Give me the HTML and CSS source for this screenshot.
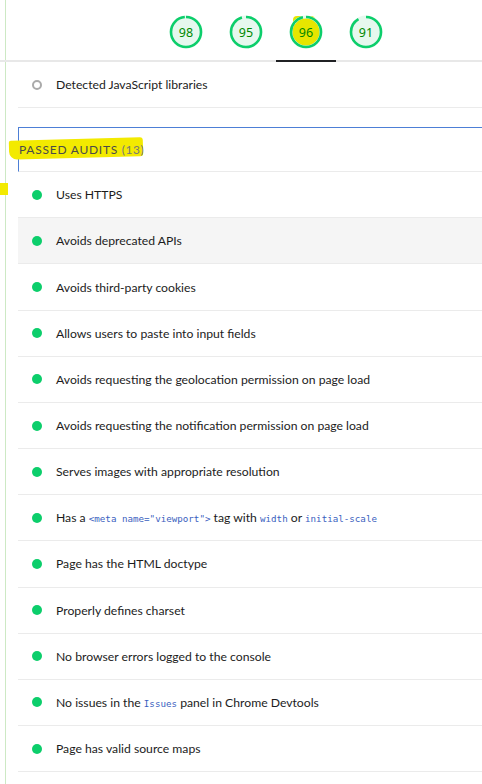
FILE: index.html
```html
<!DOCTYPE html>
<html>
<head>
<meta charset="utf-8">
<link rel="stylesheet" href="styles.css">
</head>
<body>
<div class="page">
  <div class="tabs">
    <div class="tab"><div class="gauge"><svg viewBox="0 0 34 34" width="34" height="34"><circle cx="17" cy="17" r="15" class="g-bg"/><circle cx="17" cy="17" r="15" class="g-arc" stroke-dasharray="92.4 94.25" transform="rotate(-90 17 17)"/></svg><span>98</span></div></div>
    <div class="tab"><div class="gauge"><svg viewBox="0 0 34 34" width="34" height="34"><circle cx="17" cy="17" r="15" class="g-bg"/><circle cx="17" cy="17" r="15" class="g-arc" stroke-dasharray="89.5 94.25" transform="rotate(-90 17 17)"/></svg><span>95</span></div></div>
    <div class="tab active"><div class="gauge"><span class="hl-blob"></span><svg viewBox="0 0 34 34" width="34" height="34"><circle cx="17" cy="17" r="15" class="g-bg hl"/><circle cx="17" cy="17" r="15" class="g-arc" stroke-dasharray="90.5 94.25" transform="rotate(-90 17 17)"/></svg><span>96</span></div></div>
    <div class="tab"><div class="gauge"><svg viewBox="0 0 34 34" width="34" height="34"><circle cx="17" cy="17" r="15" class="g-bg"/><circle cx="17" cy="17" r="15" class="g-arc" stroke-dasharray="85.8 94.25" transform="rotate(-90 17 17)"/></svg><span>91</span></div></div>
  </div>
  <div class="content">
    <div class="row"><span class="dot info"></span><span class="title">Detected JavaScript libraries</span></div>
    <div class="spacer"></div>
    <div class="group-head">
      <span class="marker"></span>
      <span class="group-title">Passed audits <span class="count">(13)</span></span>
    </div>
    <div class="left-mark"></div>
    <div class="row"><span class="dot pass"></span><span class="title">Uses HTTPS</span></div>
    <div class="row hover"><span class="dot pass"></span><span class="title">Avoids deprecated APIs</span></div>
    <div class="row"><span class="dot pass"></span><span class="title">Avoids third-party cookies</span></div>
    <div class="row"><span class="dot pass"></span><span class="title">Allows users to paste into input fields</span></div>
    <div class="row"><span class="dot pass"></span><span class="title">Avoids requesting the geolocation permission on page load</span></div>
    <div class="row"><span class="dot pass"></span><span class="title">Avoids requesting the notification permission on page load</span></div>
    <div class="row"><span class="dot pass"></span><span class="title">Serves images with appropriate resolution</span></div>
    <div class="row"><span class="dot pass"></span><span class="title">Has a <code>&lt;meta name="viewport"&gt;</code> tag with <code>width</code> or <code>initial-scale</code></span></div>
    <div class="row"><span class="dot pass"></span><span class="title">Page has the HTML doctype</span></div>
    <div class="row"><span class="dot pass"></span><span class="title">Properly defines charset</span></div>
    <div class="row"><span class="dot pass"></span><span class="title">No browser errors logged to the console</span></div>
    <div class="row"><span class="dot pass"></span><span class="title">No issues in the <code>Issues</code> panel in Chrome Devtools</span></div>
    <div class="row"><span class="dot pass"></span><span class="title">Page has valid source maps</span></div>
  </div>
</div>
</body>
</html>
```
FILE: styles.css
```css
html, body {
  margin: 0;
  padding: 0;
  background: #fff;
  overflow: hidden;
}
body {
  font-family: "Lato", "Noto Sans", sans-serif;
  font-size: 12.2px;
  color: #1c1c1c;
}
.page {
  width: 482px;
  height: 784px;
  border-left: 1px solid #cde9c4;
  margin-left: 5px;
  box-sizing: border-box;
  position: relative;
}
.tabs {
  display: flex;
  height: 60px;
  border-bottom: 2px solid #e8e8e8;
  margin-left: -6px;
  padding-left: 156px;
}
.tab {
  width: 60px;
  display: flex;
  justify-content: center;
  padding-top: 15px;
  box-sizing: border-box;
  position: relative;
}
.tab.active::after {
  content: "";
  position: absolute;
  left: 0;
  right: 0;
  bottom: -2px;
  height: 2px;
  background: #202124;
}
.gauge {
  position: relative;
  width: 34px;
  height: 34px;
}
.gauge svg { display: block; position: relative; }
.g-bg {
  fill: #e6f8ee;
  stroke: #e6f8ee;
  stroke-width: 3;
}
.g-bg.hl { fill: #e6e600; }
.g-arc {
  fill: none;
  stroke: #0cce6b;
  stroke-width: 2.6;
}
.hl-blob {
  position: absolute;
  left: 4px;
  top: 1px;
  width: 22px;
  height: 20px;
  background: #e6e600;
  border-radius: 4px;
}
.gauge span:not(.hl-blob) {
  position: absolute;
  inset: 0;
  display: flex;
  align-items: center;
  justify-content: center;
  font-family: "Noto Sans", sans-serif;
  font-size: 12.5px;
  color: #008800;
}
.content {
  margin-left: 12px;
}
.row {
  display: flex;
  align-items: center;
  height: 45.17px;
  border-bottom: 1px solid #ebebeb;
  padding-left: 14px;
  white-space: nowrap;
}
.row.hover { background: #f5f5f5; }
.dot {
  width: 10px;
  height: 10px;
  border-radius: 50%;
  flex: none;
  margin-right: 14px;
}
.dot.pass { background: #0cce6b; }
.dot.info {
  width: 6px;
  height: 6px;
  border: 2px solid #aaaaaa;
  background: #fff;
}
code {
  font-family: "DejaVu Sans Mono", "Liberation Mono", monospace;
  font-size: 9.2px;
  color: #3b5fc0;
}
.spacer { height: 19px; }
.group-head {
  height: 43px;
  border: 1px solid #4d7fd6;
  border-right: none;
  border-bottom: 1px solid #ebebeb;
  display: flex;
  align-items: center;
  position: relative;
}
.marker {
  position: absolute;
  left: -10px;
  top: 11px;
  width: 134px;
  height: 19px;
  background: #f3ea00;
  border-radius: 2px 3px 3px 8px;
  transform: rotate(-1.5deg);
}
.group-title {
  position: relative;
  text-transform: uppercase;
  font-size: 12px;
  letter-spacing: 0.75px;
  color: #4a4a4a;
  font-weight: 400;
}
.count { color: #777; letter-spacing: 0.5px; }
.left-mark {
  position: absolute;
  left: -6px;
  top: 183px;
  width: 8px;
  height: 12px;
  background: #f3ea00;
}
```
